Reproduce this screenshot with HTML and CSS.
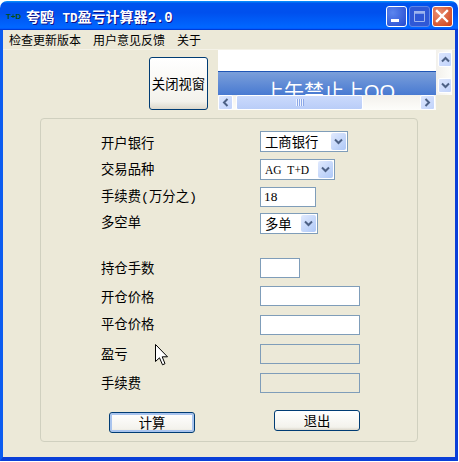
FILE: index.html
```html
<!DOCTYPE html>
<html lang="zh-CN">
<head>
    <meta charset="UTF-8">
    <meta name="viewport" content="width=device-width, initial-scale=1.0">
    <title>夸鸥 TD盈亏计算器2.0</title>
    <link rel="stylesheet" href="styles.css">
</head>
<body>
<div class="window">
    <!-- Заголовок окна -->
    <div class="titlebar">
        <span class="app-icon">T+D</span>
        <span class="app-title">夸鸥&nbsp;<span class="title-latin">TD</span>盈亏计算器2.0</span>
        <div class="win-buttons">
            <button class="win-btn win-min"><svg width="21" height="21" viewBox="0 0 21 21"><rect x="5" y="13" width="8" height="3" fill="#fff"/></svg></button>
            <button class="win-btn win-max"><svg width="21" height="21" viewBox="0 0 21 21"><path d="M5.5 5.5h10v10h-10z M5.5 7h10" fill="none" stroke="#9db4ee" stroke-width="1"/><rect x="5" y="5" width="11" height="2.5" fill="#9db4ee"/></svg></button>
            <button class="win-btn win-close"><svg width="21" height="21" viewBox="0 0 21 21"><path d="M5 5l10 10M15 5L5 15" stroke="#fff" stroke-width="2.4" stroke-linecap="square" fill="none"/></svg></button>
        </div>
    </div>

    <div class="client">
        <div class="menu">
            <span>检查更新版本</span>
            <span>用户意见反馈</span>
            <span>关于</span>
        </div>

        <div class="top-row">
            <button class="xp-btn close-view">关闭视窗</button>
            <div class="frame">
                <div class="frame-view">
                    <div class="frame-white"></div>
                    <div class="frame-banner">上午禁止上QQ</div>
                </div>
                <div class="vscroll">
                    <div class="scroll-btn"><svg width="9" height="7" viewBox="0 0 9 7"><path d="M1 5.5l3.5-3.5 3.5 3.5" fill="none" stroke="#4d6185" stroke-width="2"/></svg></div>
                    <div class="scroll-btn"><svg width="9" height="7" viewBox="0 0 9 7"><path d="M1 1.5l3.5 3.5 3.5-3.5" fill="none" stroke="#4d6185" stroke-width="2"/></svg></div>
                </div>
                <div class="hscroll">
                    <div class="scroll-btn"><svg width="7" height="9" viewBox="0 0 7 9"><path d="M5.5 1L2 4.5 5.5 8" fill="none" stroke="#4d6185" stroke-width="2"/></svg></div>
                    <div class="scroll-thumb"><span class="grip"></span></div>
                    <div class="scroll-btn"><svg width="7" height="9" viewBox="0 0 7 9"><path d="M1.5 1L5 4.5 1.5 8" fill="none" stroke="#4d6185" stroke-width="2"/></svg></div>
                </div>
                <div class="frame-corner"></div>
            </div>
        </div>

        <!-- Форма калькулятора -->
        <div class="panel">
            <div class="label label-low">开户银行</div>
            <div class="combo combo-bank"><span>工商银行</span><span class="combo-arrow"><svg width="9" height="7" viewBox="0 0 9 7"><path d="M1 1.5l3.5 3.5 3.5-3.5" fill="none" stroke="#4d6185" stroke-width="2"/></svg></span></div>

            <div class="label label-low-1">交易品种</div>
            <div class="combo combo-kind"><span class="latin">AG&nbsp;&nbsp;T+D</span><span class="combo-arrow"><svg width="9" height="7" viewBox="0 0 9 7"><path d="M1 1.5l3.5 3.5 3.5-3.5" fill="none" stroke="#4d6185" stroke-width="2"/></svg></span></div>

            <div class="label">手续费(万分之)</div>
            <input class="field field-fee" type="text" value="18">

            <div class="label">多空单</div>
            <div class="combo combo-side"><span>多单</span><span class="combo-arrow"><svg width="9" height="7" viewBox="0 0 9 7"><path d="M1 1.5l3.5 3.5 3.5-3.5" fill="none" stroke="#4d6185" stroke-width="2"/></svg></span></div>

            <div class="label label-low-1">持仓手数</div>
            <input class="field field-lots" type="text">

            <div class="label label-low-2">开仓价格</div>
            <input class="field" type="text">

            <div class="label">平仓价格</div>
            <input class="field" type="text">

            <div class="label label-low-1">盈亏</div>
            <input class="field field-off" type="text" disabled>

            <div class="label label-low-1">手续费</div>
            <input class="field field-off" type="text" disabled>

            <div class="actions">
                <button class="xp-btn action-btn calc-btn">计算</button>
                <button class="xp-btn action-btn">退出</button>
            </div>
        </div>
    </div>

    <svg class="cursor" width="13" height="22" viewBox="0 0 13 22"><path d="M0.5 0.5V17.5L4.5 13.8L7.5 20.8L10 19.7L7.2 12.8H12.5Z" fill="#fff" stroke="#000" stroke-width="1"/></svg>
</div>
</body>
</html>
```

FILE: styles.css
```css
/* Окно в стиле Windows XP */
:root {
    --color-face: #ece9d8;
    --color-frame: #0a3fd8;
    --color-input-border: #7f9db9;
    --color-btn-border: #003c74;
    --color-scroll: #c1d3fb;
}

* {
    box-sizing: border-box;
}

body {
    margin: 0;
    background-color: #fff;
    font-family: "Liberation Mono", "Noto Sans CJK SC", monospace;
    font-size: 13.33px;
    color: #000;
}

.window {
    position: relative;
    width: 458px;
    height: 460px;
    margin-top: 1px;
    display: flex;
    flex-direction: column;
}

/* Заголовок */
.titlebar {
    height: 29px;
    flex: none;
    display: flex;
    align-items: center;
    padding: 0 6px;
    border-radius: 7px 7px 0 0;
    background: linear-gradient(180deg, #0997ff, #0053ee 8%, #0050ee 40%, #0066ff 88%, #0066ff 93%, #005bff 95%, #003dd7 96%, #003dd7);
}

.app-icon {
    width: 20px;
    flex: none;
    margin-top: 2px;
    font-family: "Liberation Sans", sans-serif;
    font-size: 8px;
    font-weight: bold;
    color: #0a4f10;
}

.app-title {
    flex: 1;
    font-size: 14px;
    font-weight: bold;
    color: #fff;
    text-shadow: 1px 1px #0f1089;
    white-space: nowrap;
}

.title-latin {
    font-size: 12.5px;
}

.win-buttons {
    display: flex;
    gap: 2px;
    margin-right: -1px;
    margin-top: 2px;
}

.win-btn {
    width: 21px;
    height: 21px;
    padding: 0;
    border: 1px solid #fff;
    border-radius: 3px;
    display: block;
}

.win-btn svg {
    display: block;
    margin: -1px;
}

.win-min {
    background: radial-gradient(circle at 30% 30%, #5b85ee, #2449cf);
}

.win-max {
    background: #2f58d6;
    border-color: #5f86e6;
}

.win-close {
    background: radial-gradient(circle at 30% 30%, #e88d70, #cf3d14);
}

/* Клиентская часть */
.client {
    flex: 1;
    display: flex;
    flex-direction: column;
    background-color: var(--color-face);
    border-left: 3px solid #0b5cf0;
    border-right: 3px solid var(--color-frame);
    border-bottom: 4px solid var(--color-frame);
}

.menu {
    height: 20px;
    flex: none;
    display: flex;
    align-items: center;
    gap: 12px;
    padding-left: 6px;
    font-size: 12px;
    border-bottom: 1px solid #f4f2e8;
}

.top-row {
    height: 60px;
    flex: none;
    display: flex;
    gap: 10px;
    padding-left: 146px;
}

.xp-btn {
    padding: 0;
    font-family: inherit;
    font-size: 13.33px;
    color: #000;
    border: 1px solid var(--color-btn-border);
    border-radius: 3px;
    background: linear-gradient(180deg, #fff, #f3f2ec 85%, #dcd8cc);
}

.close-view {
    width: 59px;
    height: 53px;
    margin-top: 7px;
}

/* Встроенный фрейм со скроллами */
.frame {
    width: 234px;
    height: 60px;
    display: grid;
    grid-template-columns: 218px 16px;
    grid-template-rows: 45px 15px;
}

.frame-view {
    overflow: hidden;
}

.frame-white {
    height: 21px;
    background-color: #fff;
}

.frame-banner {
    height: 40px;
    padding: 6px 0 0 46px;
    border-top: 1px solid #1f55b5;
    background: linear-gradient(180deg, #7b9fda, #3f73d0 70%);
    font-family: "Liberation Sans", "Noto Sans CJK SC", sans-serif;
    font-size: 20px;
    line-height: 28px;
    color: #fff;
    white-space: nowrap;
}

.vscroll {
    display: flex;
    flex-direction: column;
    justify-content: space-between;
    padding: 2px 1px 2px 2px;
    background: linear-gradient(90deg, #f3f1ec, #fdfdfa);
}

.hscroll {
    display: flex;
    padding: 0 1px 0 0;
    background: linear-gradient(180deg, #f3f1ec, #fdfdfa);
}

.hscroll .scroll-btn {
    flex: none;
    height: 15px;
}

.hscroll .scroll-btn:last-child {
    margin-left: auto;
}

.scroll-btn {
    width: 15px;
    height: 15px;
    display: flex;
    align-items: center;
    justify-content: center;
    border: 1px solid #fff;
    border-radius: 2px;
    background: linear-gradient(135deg, #dce6fd, var(--color-scroll));
}

.vscroll .scroll-btn {
    width: 14px;
}

.scroll-thumb {
    width: 127px;
    height: 15px;
    margin-left: 3px;
    display: flex;
    align-items: center;
    justify-content: center;
    border: 1px solid #fff;
    border-radius: 2px;
    background: linear-gradient(180deg, #cbdafc, #b9cdf8);
}

.grip {
    width: 8px;
    height: 7px;
    background: repeating-linear-gradient(90deg, #eef3fe 0 1px, #8ca8e8 1px 2px);
}

.frame-corner {
    background-color: var(--color-face);
}

/* Группа с полями */
.panel {
    width: 378px;
    height: 324px;
    margin: 8px 0 0 37px;
    padding: 12px 0 0 60px;
    border: 1px solid #d0d0bf;
    border-radius: 4px;
    display: grid;
    grid-template-columns: 159px 1fr;
    grid-template-rows: 28px 28px 26px 45px 28px 29px 29px 29px 37px 1fr;
    align-items: start;
}

.label {
    height: 21px;
    line-height: 21px;
    white-space: nowrap;
}

.label-low {
    margin-top: 3px;
}

.label-low-1 {
    margin-top: 1px;
}

.label-low-2 {
    margin-top: 2px;
}

.combo {
    height: 21px;
    display: flex;
    align-items: center;
    justify-content: space-between;
    padding: 0 1px 0 4px;
    background-color: #fff;
    border: 1px solid var(--color-input-border);
}

.combo-bank {
    width: 88px;
}

.combo-kind {
    width: 75px;
}

.combo-side {
    width: 58px;
}

.latin {
    font-family: "Liberation Serif", serif;
    font-size: 11.5px;
}

.combo-arrow {
    width: 15px;
    height: 17px;
    display: flex;
    align-items: center;
    justify-content: center;
    border-radius: 2px;
    background: linear-gradient(135deg, #e1eafe, #aec8f7);
}

.field {
    display: block;
    width: 100px;
    height: 20px;
    padding: 0 3px;
    font-family: "Liberation Serif", serif;
    font-size: 13.33px;
    color: #000;
    background-color: #fff;
    border: 1px solid var(--color-input-border);
    border-radius: 0;
    outline: none;
}

.field-fee {
    width: 56px;
}

.field-lots {
    width: 40px;
}

.field-off {
    background-color: var(--color-face);
}

.actions {
    grid-column: 1 / 3;
    display: flex;
    align-items: flex-start;
    gap: 79px;
    margin-left: 8px;
}

.action-btn {
    width: 86px;
    height: 21px;
}

.calc-btn {
    margin-top: 2px;
    box-shadow: inset 0 0 0 2px #a9c4ee;
}

/* Курсор поверх окна */
.cursor {
    position: absolute;
    left: 155px;
    top: 343px;
}
```
